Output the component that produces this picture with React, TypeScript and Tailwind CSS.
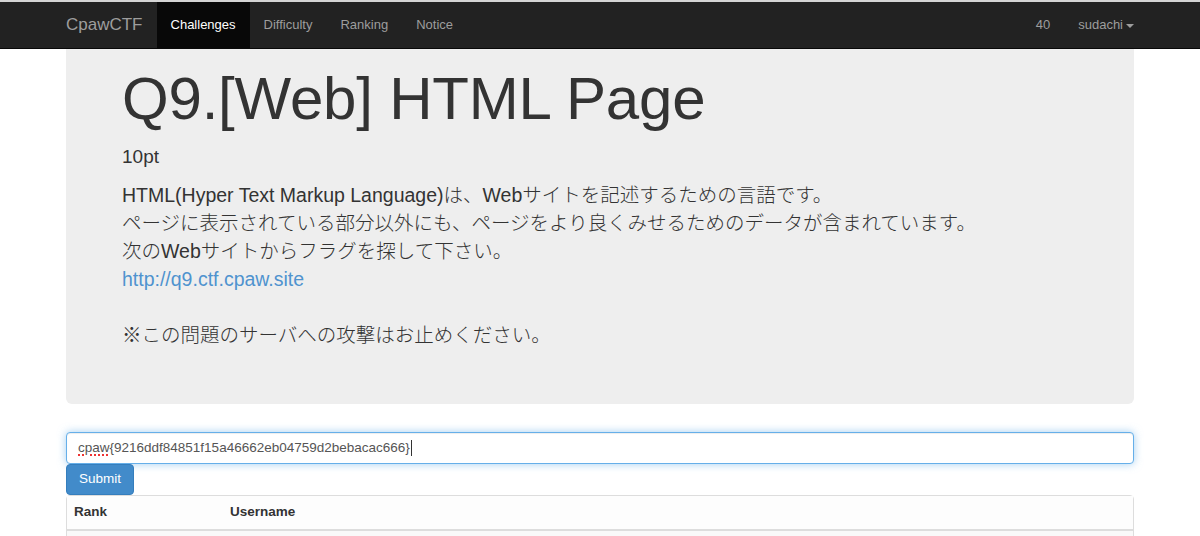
import React from "react";

const FONT = "font-['Helvetica_Neue','Liberation_Sans','Noto_Sans_CJK_JP',sans-serif]";

function Navbar() {
  return (
    <div className="bg-[#222] border-t-2 border-[#d4d4d4] border-b border-b-[#080808] h-[49px]">
      <div className="mx-[52px] flex h-full items-stretch text-[13px]">
        <a className="px-[14px] flex items-center text-[17px] text-[#9d9d9d]">CpawCTF</a>
        <a className="px-[14px] flex items-center bg-[#080808] text-white">Challenges</a>
        <a className="px-[14px] flex items-center text-[#9d9d9d]">Difficulty</a>
        <a className="px-[14px] flex items-center text-[#9d9d9d]">Ranking</a>
        <a className="px-[14px] flex items-center text-[#9d9d9d]">Notice</a>
        <div className="flex-1" />
        <a className="px-[14px] flex items-center text-[#9d9d9d]">40</a>
        <a className="px-[14px] flex items-center gap-[3px] text-[#9d9d9d]">
          sudachi
          <span className="inline-block w-0 h-0 border-x-[4px] border-x-transparent border-t-[4px] border-t-[#9d9d9d] mt-[1px]" />
        </a>
      </div>
    </div>
  );
}

export default function App() {
  return (
    <div className={`${FONT} h-[536px] bg-white text-[#333] overflow-hidden`}>
      <Navbar />
      <div className="mx-[66px]">
        <div className="bg-[#eee] rounded-b-[6px] pl-[56px] pr-[56px] pt-[17px] pb-[55px]">
          <h1 className="text-[60px] leading-[66px] font-medium tracking-[-0.2px] text-[#333]">
            Q9.[Web] HTML Page
          </h1>
          <p className="mt-[11px] text-[19px] font-light leading-[28px] text-[#333]">10pt</p>
          <div className="mt-[10px] text-[19.5px] leading-[28px] text-[#333] font-light">
            <p>HTML(Hyper Text Markup Language)は、Webサイトを記述するための言語です。</p>
            <p>ページに表示されている部分以外にも、ページをより良くみせるためのデータが含まれています。</p>
            <p>次のWebサイトからフラグを探して下さい。</p>
            <p>
              <a className="text-[#4f93cf]">http://q9.ctf.cpaw.site</a>
            </p>
            <p>&nbsp;</p>
            <p>※この問題のサーバへの攻撃はお止めください。</p>
          </div>
        </div>

        <div className="mt-[28px]">
          <div className="h-[32px] border border-[#66afe9] rounded-[4px] bg-white shadow-[inset_0_1px_1px_rgba(0,0,0,0.075),0_0_8px_rgba(102,175,233,0.6)] flex items-center px-[11px] text-[13.5px] text-[#555]">
            <span className="underline decoration-dotted decoration-[#e33] underline-offset-[3px] decoration-[2px]">cpaw</span>
            <span>{"{9216ddf84851f15a46662eb04759d2bebacac666}"}</span>
            <span className="inline-block w-px h-[16px] bg-[#333] ml-px" />
          </div>
          <button className="h-[31px] px-[12px] bg-[#428bca] border border-[#357ebd] rounded-[4px] text-white text-[13.5px]">
            Submit
          </button>
          <div className="border border-[#ddd] rounded-[4px] bg-white">
            <div className="flex h-[35px] items-center border-b-2 border-[#ddd] text-[13.5px] font-bold text-[#333] bg-[#fdfdfd]">
              <div className="w-[163px] pl-[7px]">Rank</div>
              <div>Username</div>
            </div>
            <div className="h-[34px] bg-[#f9f9f9]" />
          </div>
        </div>
      </div>
    </div>
  );
}
